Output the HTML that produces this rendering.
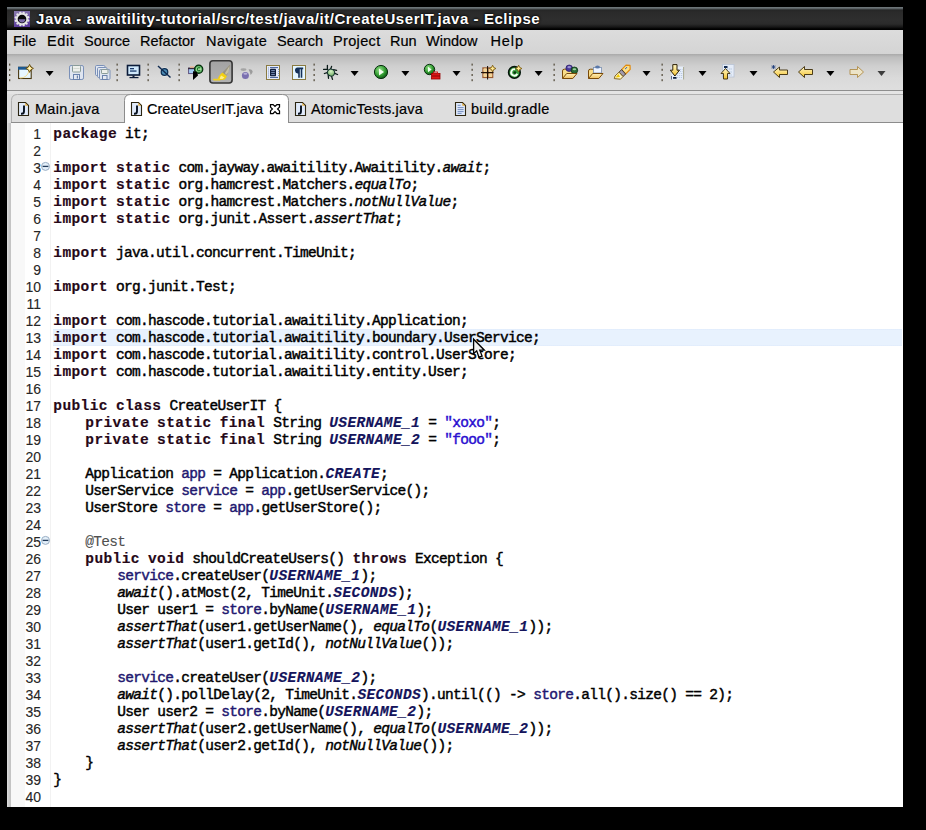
<!DOCTYPE html>
<html><head><meta charset="utf-8">
<style>
*{margin:0;padding:0;box-sizing:border-box}
html,body{width:926px;height:830px;background:#000;overflow:hidden;font-family:"Liberation Sans",sans-serif}
.abs{position:absolute}
#win{position:absolute;left:7px;top:7px;width:896px;height:800px;background:#dedede;overflow:hidden}
#title{position:absolute;left:0;top:0;width:896px;height:23px;
 background:linear-gradient(#6c7478 0px,#6c7478 1px,#4a4f52 2px,#262727 3px,#2a2a2a 5px,#2e2e2e 12px,#2b2b2b 17px,#161616 20px,#000 22px)}
#title .t{position:absolute;left:29px;top:3px;color:#fff;font-weight:bold;font-size:15px;letter-spacing:0.55px;white-space:pre;line-height:17px;text-shadow:0 0 2px #000,0 0 3px #000}
#menu{position:absolute;left:0;top:23px;width:896px;height:24px;background:linear-gradient(#dcdcdc,#d4d4d4)}
#menu span{position:absolute;top:2.6px;font-size:14.5px;line-height:17px;color:#000;white-space:pre;-webkit-text-stroke:0.2px #000}
#tool{position:absolute;left:0;top:47px;width:896px;height:37px;background:linear-gradient(#a9a9a9 0px,#bdbdbd 3px,#cfcfcf 12px,#dadada 24px,#dedede 35px);border-bottom:1px solid #8e8e8e}
#gap{position:absolute;left:0;top:84px;width:896px;height:3px;background:#e4e4e4}
#tabs{position:absolute;left:0;top:87px;width:896px;height:29px;background:#dedede;border-top:1px solid #ababab;border-bottom:1px solid #8c8c8c}
.tab{position:absolute;top:-1px;height:29px}
#tabtext span{position:absolute;top:101px;font-size:14.5px;line-height:17px;white-space:pre;color:#000;-webkit-text-stroke:0.2px #000}
#lstrip{position:absolute;left:0;top:116px;width:4px;height:684px;background:linear-gradient(90deg,#e0e0e0,#d4d4d4 1px,#c4c4c4 3px)}
#editor{position:absolute;left:4px;top:116px;width:892px;height:684px;background:#fff;overflow:hidden}
#ruler{position:absolute;left:0;top:0;width:14px;height:684px;background:#f8f8f8}
#sep{position:absolute;left:39px;top:0;width:1px;height:684px;background:#f2f2f2}
#lnums{position:absolute;left:0;top:3px;width:30px;text-align:right;font-size:14px;line-height:17px;color:#262626;white-space:pre;-webkit-text-stroke:0.1px currentColor}
#code{position:absolute;left:42.3px;top:3px;font-family:"Liberation Mono",monospace;font-size:14.5px;letter-spacing:-0.7px;line-height:17px;color:#000;white-space:pre;-webkit-text-stroke:0.45px currentColor}
#hl{position:absolute;left:42px;top:206px;width:849px;height:17px;background:linear-gradient(#dde9fb,#e8f2fe 1px,#e8f2fe 16px,#dde9fb)}
.k{color:#260818;font-weight:bold;letter-spacing:0.4px;-webkit-text-stroke-width:0.15px}
.f{color:#221870}
.sf{color:#14145c;font-weight:bold;font-style:italic;letter-spacing:0.4px;-webkit-text-stroke-width:0.15px}
.i{font-style:italic}
.s{color:#2a10d0}
.a{color:#505050;-webkit-text-stroke:0.1px currentColor}
</style></head><body>
<div id="win">
 <div id="title">
  <svg class="abs" style="left:7px;top:4px" width="16" height="16" viewBox="0 0 16 16">
   <defs><linearGradient id="gEc" x1="0" y1="0" x2="0.3" y2="1"><stop offset="0" stop-color="#8a7cae"/><stop offset="1" stop-color="#5a3a9c"/></linearGradient></defs>
   <rect x="0" y="0" width="16" height="16" fill="url(#gEc)"/>
   <g fill="#e6e6e6"><circle cx="14.09" cy="9.62" r="1.25"/><circle cx="12.46" cy="12.45" r="1.25"/><circle cx="9.64" cy="14.08" r="1.25"/><circle cx="6.38" cy="14.09" r="1.25"/><circle cx="3.55" cy="12.46" r="1.25"/><circle cx="1.92" cy="9.64" r="1.25"/><circle cx="1.91" cy="6.38" r="1.25"/><circle cx="3.54" cy="3.55" r="1.25"/><circle cx="6.36" cy="1.92" r="1.25"/><circle cx="9.62" cy="1.91" r="1.25"/><circle cx="12.45" cy="3.54" r="1.25"/><circle cx="14.08" cy="6.36" r="1.25"/></g>
   <circle cx="8" cy="8" r="6" fill="#e6e6e6"/>
   <circle cx="8" cy="8" r="4.3" fill="#080808"/>
   <path d="M4.6 8.2 h6.8 q-0.6 3.4 -3.4 3.4 q-2.8 0 -3.4 -3.4z" fill="#7a68a8"/>
  </svg>
  <div class="t">Java - awaitility-tutorial/src/test/java/it/CreateUserIT.java - Eclipse</div>
 </div>
 <div id="menu">
  <span style="left:6px">File</span>
  <span style="left:40px;letter-spacing:0.6px">Edit</span>
  <span style="left:77px">Source</span>
  <span style="left:133px">Refactor</span>
  <span style="left:199px;letter-spacing:0.5px">Navigate</span>
  <span style="left:270px">Search</span>
  <span style="left:326px;letter-spacing:0.35px">Project</span>
  <span style="left:383px">Run</span>
  <span style="left:419px">Window</span>
  <span style="left:483.5px;letter-spacing:0.9px">Help</span>
 </div>
 <div id="tool"></div>
 <div id="gap"></div>
 
 <div id="lstrip"></div>
 <div id="editor">
  <div id="ruler"></div>
  <div id="sep"></div>
  <div id="hl"></div>
  <div id="lnums">1
2
3
4
5
6
7
8
9
10
11
12
13
14
15
16
17
18
19
20
21
22
23
24
25
26
27
28
29
30
31
32
33
34
35
36
37
38
39
40</div>
  <div id="code"><span class="k">package</span> it;

<span class="k">import</span> <span class="k">static</span> com.jayway.awaitility.Awaitility.<span class="i">await</span>;
<span class="k">import</span> <span class="k">static</span> org.hamcrest.Matchers.<span class="i">equalTo</span>;
<span class="k">import</span> <span class="k">static</span> org.hamcrest.Matchers.<span class="i">notNullValue</span>;
<span class="k">import</span> <span class="k">static</span> org.junit.Assert.<span class="i">assertThat</span>;

<span class="k">import</span> java.util.concurrent.TimeUnit;

<span class="k">import</span> org.junit.Test;

<span class="k">import</span> com.hascode.tutorial.awaitility.Application;
<span class="k">import</span> com.hascode.tutorial.awaitility.boundary.UserService;
<span class="k">import</span> com.hascode.tutorial.awaitility.control.UserStore;
<span class="k">import</span> com.hascode.tutorial.awaitility.entity.User;

<span class="k">public</span> <span class="k">class</span> CreateUserIT {
    <span class="k">private</span> <span class="k">static</span> <span class="k">final</span> String <span class="sf">USERNAME_1</span> = <span class="s">"xoxo"</span>;
    <span class="k">private</span> <span class="k">static</span> <span class="k">final</span> String <span class="sf">USERNAME_2</span> = <span class="s">"fooo"</span>;

    Application <span class="f">app</span> = Application.<span class="sf">CREATE</span>;
    UserService <span class="f">service</span> = <span class="f">app</span>.getUserService();
    UserStore <span class="f">store</span> = <span class="f">app</span>.getUserStore();

    <span class="a">@Test</span>
    <span class="k">public</span> <span class="k">void</span> shouldCreateUsers() <span class="k">throws</span> Exception {
        <span class="f">service</span>.createUser(<span class="sf">USERNAME_1</span>);
        <span class="i">await</span>().atMost(2, TimeUnit.<span class="sf">SECONDS</span>);
        User user1 = <span class="f">store</span>.byName(<span class="sf">USERNAME_1</span>);
        <span class="i">assertThat</span>(user1.getUserName(), <span class="i">equalTo</span>(<span class="sf">USERNAME_1</span>));
        <span class="i">assertThat</span>(user1.getId(), <span class="i">notNullValue</span>());

        <span class="f">service</span>.createUser(<span class="sf">USERNAME_2</span>);
        <span class="i">await</span>().pollDelay(2, TimeUnit.<span class="sf">SECONDS</span>).until(() -&gt; <span class="f">store</span>.all().size() == 2);
        User user2 = <span class="f">store</span>.byName(<span class="sf">USERNAME_2</span>);
        <span class="i">assertThat</span>(user2.getUserName(), <span class="i">equalTo</span>(<span class="sf">USERNAME_2</span>));
        <span class="i">assertThat</span>(user2.getId(), <span class="i">notNullValue</span>());
    }
}
</div>
 </div>
</div>
<svg width="926" height="830" viewBox="0 0 926 830" style="position:absolute;left:0;top:0">
<defs>
 <g id="jicon">
  <path d="M0.5 0.5 h7 l3 3 v10 h-10z" fill="#e0eafa" stroke="#2a2410" stroke-width="1.1"/>
  <path d="M7.3 0.8 l2.9 2.9 h-2.9z" fill="#e8b040"/>
  <path d="M6 3.6 v5.6 q0 2.6 -2.4 2.6 h-0.6" stroke="#06101e" stroke-width="1.9" fill="none"/>
 </g>
</defs>
<!-- tab row background -->
<rect x="11" y="94" width="892" height="28" fill="#dedede"/>
<path d="M11.5 122 V100.5 Q11.5 94.5 17.5 94.5 H903" fill="none" stroke="#b0b0b0" stroke-width="1"/>
<path d="M11 122.5 H903" stroke="#8c8c8c" stroke-width="1"/>
<!-- active tab -->
<path d="M124.5 123 V100.5 Q124.5 94.5 130.5 94.5 H282.5 Q288.5 94.5 288.5 100.5 V123" fill="#fff" stroke="#8c8c8c" stroke-width="1"/>
<rect x="125" y="121" width="163" height="3" fill="#fff"/>
<use href="#jicon" x="18" y="102"/>
<use href="#jicon" x="131" y="102"/>
<use href="#jicon" x="295" y="102"/>
<!-- gradle text icon -->
<g>
 <path d="M455.5 102.5 h7 l3 3 v10 h-10z" fill="#dfe9fa" stroke="#2e2610" stroke-width="1.1"/>
 <path d="M462.3 102.8 l2.9 2.9 h-2.9z" fill="#e0a838"/>
 <path d="M457.6 105.3h3M457.6 107.6h6M457.6 109.6h6M457.6 111.6h6M457.6 113.4h4" stroke="#6a84b8" stroke-width="0.9"/>
</g>
<!-- close X -->
<path d="M270.5 104.5 h2.6 l1.9 1.9 l1.9 -1.9 h2.6 v2.6 l-1.9 1.9 l1.9 1.9 v2.6 h-2.6 l-1.9 -1.9 l-1.9 1.9 h-2.6 v-2.6 l1.9 -1.9 l-1.9 -1.9z" fill="#fff" stroke="#000" stroke-width="1.25" stroke-linejoin="miter"/>
</svg>
<svg id="ov" width="926" height="830" viewBox="0 0 926 830" style="position:absolute;left:0;top:0">
<defs>
 <linearGradient id="gFold" x1="0" y1="0" x2="0" y2="1"><stop offset="0" stop-color="#fff2b8"/><stop offset="1" stop-color="#f0c060"/></linearGradient>
 <linearGradient id="gArrow" x1="0" y1="0" x2="0" y2="1"><stop offset="0" stop-color="#fff7c8"/><stop offset="1" stop-color="#f5c430"/></linearGradient>
 <radialGradient id="gGreen" cx="0.4" cy="0.35" r="0.7"><stop offset="0" stop-color="#9be38f"/><stop offset="0.6" stop-color="#2f9a2f"/><stop offset="1" stop-color="#0b4a12"/></radialGradient>
 <radialGradient id="gBug" cx="0.4" cy="0.35" r="0.7"><stop offset="0" stop-color="#d8f4c8"/><stop offset="1" stop-color="#6aa860"/></radialGradient>
 <radialGradient id="gPurp" cx="0.4" cy="0.35" r="0.7"><stop offset="0" stop-color="#8a7cc0"/><stop offset="1" stop-color="#2c1c6a"/></radialGradient>
 <linearGradient id="gPress" x1="0" y1="0" x2="0" y2="1"><stop offset="0" stop-color="#a2a2a2"/><stop offset="1" stop-color="#b2b2b2"/></linearGradient>
</defs>
<!-- grips -->
<g fill="#585040">
 <g id="grip"><rect x="9" y="63.6" width="1.3" height="2"/><rect x="9" y="68.8" width="1.3" height="2"/><rect x="9" y="74" width="1.3" height="2"/><rect x="9" y="79.2" width="1.3" height="2"/></g>
 <use href="#grip" x="107.5"/><use href="#grip" x="138.5"/><use href="#grip" x="169.5"/><use href="#grip" x="304.5"/><use href="#grip" x="462.5"/><use href="#grip" x="544.5"/><use href="#grip" x="652.5"/>
</g>
<!-- dropdown arrows -->
<g fill="#000">
 <path id="dd" d="M45.6 71 h8 l-4 5z"/>
 <use href="#dd" x="305"/><use href="#dd" x="355.8"/><use href="#dd" x="406.9"/><use href="#dd" x="489"/><use href="#dd" x="596.9"/><use href="#dd" x="652.9"/><use href="#dd" x="703.9"/><use href="#dd" x="780.8"/>
 <use href="#dd" x="831.9" fill="#3c3c3c"/>
</g>
<!-- new wizard -->
<g>
 <rect x="18.6" y="67.3" width="12.6" height="11.2" fill="#e6f6ff" stroke="#4a3810" stroke-width="1.1"/>
 <rect x="18" y="66.8" width="13.5" height="2.9" fill="#1c5890"/>
 <path d="M20 78 q7 0 9 -7" stroke="#f4dc90" stroke-width="1" fill="none"/>
 <path d="M29.6 64.4 q0.6 3.2 3.8 4 q-3.2 0.8 -3.8 4 q-0.6 -3.2 -3.8 -4 q3.2 -0.8 3.8 -4z" fill="#ffe890" stroke="#6a5010" stroke-width="1"/>
 <circle cx="29.6" cy="68.4" r="1" fill="#fff8d8"/>
</g>
<!-- save disabled -->
<g stroke-width="1">
 <rect x="69.5" y="65.5" width="14" height="14" rx="1.6" fill="#dfe5f0" stroke="#7a90b8"/>
 <rect x="72.5" y="65.5" width="8" height="6.5" rx="0.8" fill="#eef0ec" stroke="#8a9c98"/>
 <path d="M73.5 68.5h6" stroke="#c8d0c8" stroke-width="0.7"/>
 <rect x="73.5" y="74.5" width="6" height="5" fill="#e6eaf2" stroke="#6a82ac"/>
 <rect x="76.8" y="75.5" width="1.2" height="3" fill="#6a82ac"/>
</g>
<g stroke-width="1">
 <rect x="95.5" y="65.5" width="9.5" height="10" rx="1.2" fill="#e2e8f2" stroke="#7a90b8"/>
 <rect x="97.5" y="67.5" width="9.5" height="10" rx="1.2" fill="#e2e8f2" stroke="#7a90b8"/>
 <rect x="99.5" y="69.5" width="10.5" height="10" rx="1.2" fill="#dfe5f0" stroke="#7a90b8"/>
 <rect x="101.5" y="69.5" width="6.5" height="4" rx="0.6" fill="#eef0ec" stroke="#8a9c98"/>
 <rect x="102.5" y="75.5" width="4.5" height="4" fill="#e6eaf2" stroke="#6a82ac"/>
</g>
<!-- monitor -->
<g>
 <rect x="127.5" y="65.5" width="12" height="9.5" fill="#cfe8fb" stroke="#0c1c3a" stroke-width="1.6"/>
 <rect x="130" y="68" width="4" height="1.3" fill="#1a3a6c"/><rect x="130" y="70.4" width="6.5" height="1.3" fill="#1a3a6c"/>
 <rect x="132.5" y="75.5" width="2" height="1.5" fill="#0c1c3a"/><rect x="129.5" y="77" width="9" height="1.2" fill="#0c1c3a"/>
</g>
<!-- unlink -->
<g>
 <circle cx="164.5" cy="72" r="4.5" fill="#f4f8fa" opacity="0.7"/>
 <circle cx="164.5" cy="72" r="3.3" fill="#4a8ab4" stroke="#0c2c50" stroke-width="1.3"/>
 <path d="M158 66 L170.5 77.5" stroke="#102a50" stroke-width="1.4"/>
</g>
<!-- class + cursor -->
<g>
 <rect x="188.6" y="68.4" width="6" height="5.2" fill="#a0ccf4" stroke="#5a4a7a" stroke-width="0.9"/>
 <rect x="188" y="67.6" width="7" height="1.6" fill="#3a2a40"/>
 <rect x="190" y="66.4" width="4" height="1.3" fill="#f0b890"/>
 <circle cx="198.7" cy="69.2" r="4.1" fill="#3a9a48" stroke="#062a0c" stroke-width="1.2"/>
 <circle cx="198.7" cy="69.2" r="2.8" fill="#a8dca0"/>
 <path d="M200.2 68.2 a1.6 1.6 0 1 0 0 2" stroke="#1a7a2a" stroke-width="1.2" fill="none"/>
 <path d="M193 71.2 L193 80 L198 75.6 L197 71.8z" fill="#000"/>
</g>
<!-- pressed toggle highlighter -->
<g>
 <rect x="209.9" y="60.8" width="22.2" height="22.2" rx="3" fill="url(#gPress)" stroke="#363636" stroke-width="1.6"/>
 <path d="M229.8 64.8 L230.2 66 L226.8 75.8 L222.2 72.8 Z" fill="#9a9480"/>
 <path d="M229.5 66 L228.5 72 L226 75 L225 73 Z" fill="#c4c0a8"/>
 <path d="M222.3 72.4 L226.9 76.2 L224.8 79.6 L219 80.2 L218 78 L219.6 75.2 Z" fill="#f2d010"/>
 <path d="M221 75.5 L224.5 77.5 L222.5 79 L219.5 79 Z" fill="#fff08a"/>
 <path d="M213.8 79.6 h6" stroke="#f0d020" stroke-width="1.6" stroke-linecap="round"/>
</g>
<!-- disabled gray -->
<g>
 <ellipse cx="243.5" cy="69.6" rx="3" ry="1.3" fill="#a4a4a4"/>
 <path d="M248.5 69.5 q3 -1 4.2 1.8 q-0.2 2.5 -2 3.8 q-0.5 -3 -2.2 -5.6z" fill="#9c9c9c"/>
 <circle cx="245.4" cy="75.6" r="3.5" fill="#7a70b0"/>
 <ellipse cx="245.4" cy="73.8" rx="2" ry="1" fill="#b8b0d8"/>
</g>
<!-- block selection -->
<g>
 <rect x="266.5" y="65.5" width="13" height="14" fill="#e6ecfa" stroke="#8a7a40" stroke-width="1"/>
 <path d="M270 67.6h8M270 77.4h8" stroke="#2a4a8a" stroke-width="0.9"/>
 <path d="M268.5 67.5v10.5M278.5 69v8" stroke="#5a78b0" stroke-width="0.8" stroke-dasharray="0.9 1.1"/>
 <rect x="270" y="68.8" width="6" height="7.5" rx="0.8" fill="#0e1c3a"/>
 <path d="M271.2 70.6h3.6M271.2 72.6h3.6M271.2 74.6h3.6" stroke="#8aa0c8" stroke-width="0.9"/>
</g>
<!-- pilcrow -->
<g>
 <rect x="292.5" y="65.5" width="13" height="14" fill="#e4f6ff" stroke="#8a7a40" stroke-width="1"/>
 <path d="M297.6 67.6 h5.6 v1.6 h-0.9 v8.6 h-1.6 v-8.6 h-0.9 v8.6 h-1.6 v-4.4 a2.5 2.5 0 0 1 -0.6 -5.8z" fill="#143058"/>
</g>
<!-- bug -->
<g stroke="#0a1a18" stroke-width="1.3" fill="none" stroke-linecap="round">
 <path d="M327.4 65.3 v4.2M331.6 66.4 l-1 2.8M323.6 69.4 h3.6M333.6 69.6 l3 0.8M324.4 73.5 l2.8 -0.9M334.8 73.4 l2.7 1.1M328.2 75 l0.3 3.3M331.6 76.4 l0.9 3"/>
</g>
<ellipse cx="331" cy="72.6" rx="3.6" ry="3.4" transform="rotate(30 331 72.6)" fill="url(#gBug)" stroke="#12302c" stroke-width="1"/>
<!-- run -->
<circle cx="381" cy="72" r="6.6" fill="url(#gGreen)" stroke="#0a3010" stroke-width="1"/>
<path d="M379 68.5 l5 3.5 -5 3.5z" fill="#f4fff0"/>
<!-- ext tools -->
<circle cx="429.5" cy="69.5" r="5.2" fill="url(#gGreen)" stroke="#0a3010" stroke-width="1"/>
<path d="M428 66.8 l3.6 2.7 -3.6 2.7z" fill="#f0fff0"/>
<rect x="431.5" y="73.5" width="8.5" height="5.5" fill="#e01818" stroke="#900" stroke-width="0.8"/>
<rect x="433.5" y="72" width="4" height="2" fill="none" stroke="#d01010" stroke-width="0.9"/>
<path d="M432 76h8" stroke="#600" stroke-width="0.7"/>
<!-- new package -->
<g>
 <rect x="482.3" y="67.3" width="11" height="10.8" fill="#9a5a30"/>
 <rect x="483.3" y="68.3" width="3.8" height="3.8" rx="1.2" fill="#f2d498"/><rect x="488.5" y="68.3" width="3.8" height="3.8" rx="1.2" fill="#f2d498"/>
 <rect x="483.3" y="73.3" width="3.8" height="3.8" rx="1.2" fill="#f2d498"/><rect x="488.5" y="73.3" width="3.8" height="3.8" rx="1.2" fill="#f2d498"/>
 <path d="M481 72.6 h12.5M487.6 66 v13.5" stroke="#140c04" stroke-width="1"/>
 <path d="M492.6 65.2 q0.5 2.8 3.3 3.3 q-2.8 0.5 -3.3 3.3 q-0.5 -2.8 -3.3 -3.3 q2.8 -0.5 3.3 -3.3z" fill="#ffe890" stroke="#7a5a10" stroke-width="0.9"/>
</g>
<!-- new class -->
<g>
 <circle cx="514.4" cy="72.4" r="5.8" fill="#3aa040" stroke="#04140a" stroke-width="1.6"/>
 <circle cx="514.4" cy="72.4" r="3.2" fill="none" stroke="#f4fff4" stroke-width="1.8" stroke-dasharray="14 6.2" transform="rotate(25 514.4 72.4)"/>
 <circle cx="514.8" cy="72.6" r="1.4" fill="#0a3a10"/>
 <path d="M518.6 65.2 q0.5 2.8 3.3 3.3 q-2.8 0.5 -3.3 3.3 q-0.5 -2.8 -3.3 -3.3 q2.8 -0.5 3.3 -3.3z" fill="#ffe890" stroke="#7a5a10" stroke-width="0.9"/>
</g>
<!-- open type -->
<g>
 <path d="M562.5 78.5 V71 q0 -1.8 1.8 -1.8 h2.5 l1 1 h7 v3.5" fill="#f8dc88" stroke="#7a4a08" stroke-width="1"/>
 <circle cx="569.2" cy="68.3" r="3.3" fill="#4a3a9a" stroke="#281a68" stroke-width="0.7"/>
 <ellipse cx="569.2" cy="67.2" rx="1.8" ry="1.1" fill="#9a90d0"/>
 <circle cx="574.4" cy="70.3" r="3.3" fill="#2a6a34" stroke="#0c3414" stroke-width="0.8"/>
 <ellipse cx="574.4" cy="69.3" rx="1.8" ry="1" fill="#9ad0a0"/>
 <path d="M562.5 78.5 l4.2 -5 h10.3 l-4.2 5z" fill="url(#gFold)" stroke="#7a4a08" stroke-width="1"/>
</g>
<!-- open resource -->
<g>
 <path d="M588.5 78.5 V71 q0 -1.8 1.8 -1.8 h2.5 l1 1 h7 v3.5" fill="#f8dc88" stroke="#7a4a08" stroke-width="1"/>
 <rect x="593.5" y="67.5" width="8" height="5.5" fill="#eef4ff" stroke="#7a90b0" stroke-width="0.8"/>
 <ellipse cx="597.5" cy="67" rx="2.4" ry="1.5" fill="#5a78a8"/>
 <path d="M588.5 78.5 l4.2 -5 h10.3 l-4.2 5z" fill="url(#gFold)" stroke="#7a4a08" stroke-width="1"/>
</g>
<!-- search pen -->
<g stroke-linejoin="round">
 <path d="M621.6 69.6 L626 65.2 L630 65.4 L630.2 69.4 L625.6 74z" fill="#fae08a" stroke="#e08a10" stroke-width="1.2"/>
 <path d="M619 72.2 L621.6 69.6 L625.6 74 L623 76.6z" fill="#a09aae" stroke="#3a3020" stroke-width="0.9"/>
 <path d="M614.3 78.6 L615 76 L619 72.2 L623 76.6 L620.5 79.2z" fill="#fff6c0" stroke="#7a5a10" stroke-width="0.9"/>
 <path d="M615.5 77.5 L618.5 74 L620 77 z" fill="#f0c800"/>
 <circle cx="625.6" cy="68.6" r="0.6" fill="#2a5ac0"/><circle cx="626.6" cy="67.6" r="0.6" fill="#2a5ac0"/>
</g>
<!-- next annotation -->
<g>
 <rect x="671.5" y="66.5" width="12" height="13" fill="#e6eefa"/>
 <path d="M671.5 76 v3.5" stroke="#5a6a90" stroke-width="1"/>
 <path d="M683.6 67 v12.5" stroke="#a8a890" stroke-width="1"/>
 <path d="M678 69.5h4.5M678 71.5h4.5M677 73.5h5.5M677 75.5h5.5M677 77.5h5" stroke="#a8b8d4" stroke-width="0.7" stroke-dasharray="1.2 0.8"/>
 <rect x="673" y="77" width="3.6" height="1.8" rx="0.6" fill="#0a1a38"/>
 <path d="M672.8 64.6 h4.2 v5.6 h2.5 l-4.6 5.8 -4.6 -5.8 h2.5z" fill="url(#gArrow)" stroke="#2e2006" stroke-width="1"/>
</g>
<!-- prev annotation -->
<g>
 <rect x="722.5" y="64.5" width="11.5" height="12.5" fill="#e4ecf8" stroke="#b8c4d4" stroke-width="0.8"/>
 <path d="M727 69h5M727 72h5M727 75h5" stroke="#8aa0c0" stroke-width="0.7" stroke-dasharray="1 0.8"/>
 <rect x="724" y="66" width="3.5" height="2" fill="#102a50"/>
 <path d="M725.5 68.5 l4.5 5 h-2.5 v5.5 h-4 v-5.5 h-2.5z" fill="url(#gArrow)" stroke="#3a2a08" stroke-width="0.9"/>
</g>
<!-- last edit -->
<g>
 <path d="M773.5 72 l6 -5 v3 h8 v4.5 h-8 v3z" fill="url(#gArrow)" stroke="#3a2a08" stroke-width="0.9"/>
 <path d="M772 65.5 l3 3M775 65.5 l-3 3M773.5 65 v4M771.5 67 h4" stroke="#1a3a7a" stroke-width="0.8"/>
</g>
<!-- back -->
<path d="M798.5 72 l6 -5.5 v3 h8 v5 h-8 v3z" fill="url(#gArrow)" stroke="#3a2a08" stroke-width="0.9"/>
<!-- forward (disabled) -->
<path d="M863.5 72 l-6 -5.5 v3 h-7.5 v5 h7.5 v3z" fill="#ece4c8" stroke="#b08c48" stroke-width="0.9"/>
</svg>


<svg class="abs" style="left:0;top:0" width="926" height="830">
 <g id="fold"><circle cx="45.5" cy="166.4" r="4" fill="#e4f0fa" stroke="#9aaec4" stroke-width="1"/><path d="M42.6 166.4h5.8" stroke="#203a5a" stroke-width="1.3"/></g>
 <use href="#fold" y="374"/>
</svg>
<div id="tabtext"><span style="left:35px;letter-spacing:0.27px">Main.java</span><span style="left:147px">CreateUserIT.java</span><span style="left:311px;letter-spacing:0.2px">AtomicTests.java</span><span style="left:471px;letter-spacing:0.3px">build.gradle</span></div>
<svg class="abs" style="left:0;top:0" width="926" height="830"><path d="M473.6 339.2 L473.6 353.8 L476.7 350.9 L478.9 357.2 L482.1 356.1 L479.8 350.2 L484.4 350.2 Z" fill="#f2f2f2" stroke="#000" stroke-width="1.3" stroke-linejoin="miter"/></svg>
</body></html>
